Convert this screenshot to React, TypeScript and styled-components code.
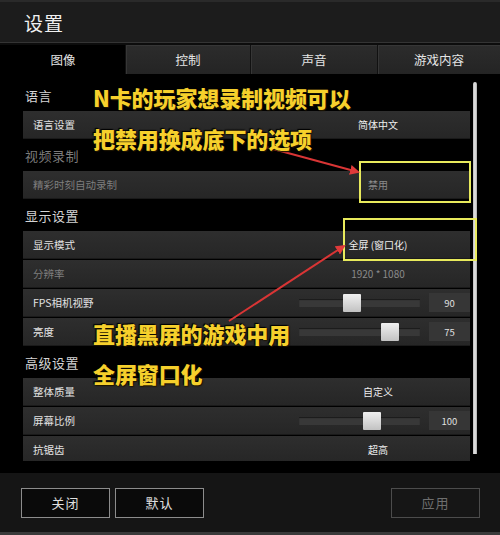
import React from "react";
import styled, { createGlobalStyle } from "styled-components";

const GlobalStyle = createGlobalStyle`
  html, body {
    margin: 0;
    padding: 0;
    background: #000;
  }
  body {
    font-family: "Noto Sans CJK SC", "Noto Sans", sans-serif;
    color: #ddd;
  }
`;

const Window = styled.div`
  position: relative;
  width: 500px;
  height: 535px;
  display: flex;
  flex-direction: column;
  background: #000;
  overflow: hidden;
`;

const TitleBar = styled.div`
  height: 40px;
  display: flex;
  align-items: center;
  padding-left: 24px;
  background: #1c1c1c;
  border-top: 2px solid #2a2a2a;
  border-bottom: 1px solid #343434;
  font-size: 19px;
  color: #f0f0f0;
  letter-spacing: 1px;
`;

const TabBar = styled.div`
  display: grid;
  grid-template-columns: 125px 125px 127px 1fr;
  height: 29px;
  padding-top: 2px;
  background: #0c0c0c;
`;

const Tab = styled.div<{ $active?: boolean }>`
  display: flex;
  align-items: center;
  justify-content: center;
  font-size: 12.5px;
  color: #e4e4e4;
  background: ${({ $active }) =>
    $active ? "#000" : "linear-gradient(#2c2c2c, #242424)"};
  border-left: 1px solid ${({ $active }) => ($active ? "#000" : "#111")};
  box-shadow: ${({ $active }) =>
    $active ? "none" : "inset 1px 1px 0 #363636"};
`;

const Content = styled.div`
  position: relative;
  flex: 1;
  background: #000;
  padding-bottom: 10px;
`;

const ScrollArea = styled.div`
  height: 382px;
  overflow: hidden;
  padding: 5px 30px 0 23px;
`;

const ScrollThumb = styled.div`
  position: absolute;
  top: 8px;
  right: 23px;
  width: 4px;
  height: 372px;
  border-radius: 2px 2px 0 0;
  background: linear-gradient(90deg, #bbb, #e6e6e6, #aaa);
`;

const SectionTitle = styled.div<{ $dim?: boolean }>`
  height: 32px;
  display: flex;
  align-items: center;
  padding-left: 2px;
  font-size: 13px;
  color: ${({ $dim }) => ($dim ? "#7c7c7c" : "#d4d4d4")};
  letter-spacing: 0.5px;
`;

const RowList = styled.div`
  display: flex;
  flex-direction: column;
  gap: 1px;
`;

const Row = styled.div`
  height: 28px;
  display: flex;
  align-items: center;
  background: linear-gradient(#2e2e2e, #262626);
  border-bottom: 1px solid #1a1a1a;
  box-sizing: border-box;
`;

const Label = styled.div<{ $dim?: boolean }>`
  flex: 1;
  padding-left: 10px;
  font-size: 10.5px;
  color: ${({ $dim }) => ($dim ? "#7e7e7e" : "#e2e2e2")};
`;

const Value = styled.div<{ $dim?: boolean }>`
  width: 176px;
  margin-right: 4px;
  text-align: center;
  font-size: 10px;
  color: ${({ $dim }) => ($dim ? "#8a8a8a" : "#eeeeee")};
`;

const Track = styled.div`
  position: relative;
  width: 121px;
  height: 8px;
  margin-right: 9px;
  background: #383838;
  box-shadow: inset 0 1px 1px #1a1a1a;
`;

const Thumb = styled.div<{ $pos: number }>`
  position: absolute;
  top: -5px;
  left: ${({ $pos }) => `calc(${$pos * 100}% - 9px)`};
  width: 18px;
  height: 18px;
  border-radius: 1px;
  background: linear-gradient(#f0f0f0, #c2c2c2);
`;

const NumberBox = styled.div`
  width: 41px;
  height: 19px;
  display: flex;
  align-items: center;
  justify-content: center;
  background: #363636;
  font-size: 9.5px;
  color: #e0e0e0;
`;

const BottomBar = styled.div`
  height: 59px;
  display: flex;
  align-items: center;
  gap: 5px;
  padding: 0 20px 0 21px;
  background: #151515;
  border-bottom: 3px solid #3a3a3a;
`;

const Button = styled.div<{ $disabled?: boolean }>`
  width: 87px;
  height: 28px;
  display: flex;
  align-items: center;
  justify-content: center;
  font-size: 13px;
  letter-spacing: 1px;
  color: ${({ $disabled }) => ($disabled ? "#6e6e6e" : "#e0e0e0")};
  background: ${({ $disabled }) => ($disabled ? "#161616" : "#0a0a0a")};
  border: 1px solid ${({ $disabled }) => ($disabled ? "#4c4c4c" : "#8c8c8c")};
`;

const Spacer = styled.div`
  flex: 1;
`;

/* annotation overlay drawn on top of the screenshot */
const Note = styled.div<{ $top: number }>`
  position: absolute;
  left: 93px;
  top: ${({ $top }) => $top}px;
  line-height: 30px;
  font-size: 22px;
  font-weight: 900;
  color: #f6d02c;
  letter-spacing: -0.1px;
  text-shadow: 0 0 2px #000, 1px 1px 1px #2a1e00, -1px -1px 1px #000;
  pointer-events: none;
`;

const Highlight = styled.div<{ $l: number; $t: number; $w: number; $h: number }>`
  position: absolute;
  left: ${({ $l }) => $l}px;
  top: ${({ $t }) => $t}px;
  width: ${({ $w }) => $w}px;
  height: ${({ $h }) => $h}px;
  box-sizing: border-box;
  border: 2px solid #e8ea5c;
  pointer-events: none;
`;

const ArrowLayer = styled.svg`
  position: absolute;
  left: 0;
  top: 0;
  pointer-events: none;
`;

interface SliderRowProps {
  label: string;
  value: number;
  pos: number;
}

const SliderRow = ({ label, value, pos }: SliderRowProps) => (
  <Row>
    <Label>{label}</Label>
    <Track>
      <Thumb $pos={pos} />
    </Track>
    <NumberBox>{value}</NumberBox>
  </Row>
);

export default function App() {
  return (
    <>
      <GlobalStyle />
      <Window>
        <TitleBar>设置</TitleBar>
        <TabBar>
          <Tab $active>图像</Tab>
          <Tab>控制</Tab>
          <Tab>声音</Tab>
          <Tab>游戏内容</Tab>
        </TabBar>

        <Content>
          <ScrollArea>
            <SectionTitle>语言</SectionTitle>
            <RowList>
              <Row>
                <Label>语言设置</Label>
                <Value>简体中文</Value>
              </Row>
            </RowList>

            <SectionTitle $dim>视频录制</SectionTitle>
            <RowList>
              <Row>
                <Label $dim>精彩时刻自动录制</Label>
                <Value $dim>禁用</Value>
              </Row>
            </RowList>

            <SectionTitle>显示设置</SectionTitle>
            <RowList>
              <Row>
                <Label>显示模式</Label>
                <Value>全屏 (窗口化)</Value>
              </Row>
              <Row>
                <Label $dim>分辨率</Label>
                <Value $dim>1920 * 1080</Value>
              </Row>
              <SliderRow label="FPS相机视野" value={90} pos={0.44} />
              <SliderRow label="亮度" value={75} pos={0.75} />
            </RowList>

            <SectionTitle>高级设置</SectionTitle>
            <RowList>
              <Row>
                <Label>整体质量</Label>
                <Value>自定义</Value>
              </Row>
              <SliderRow label="屏幕比例" value={100} pos={0.6} />
              <Row>
                <Label>抗锯齿</Label>
                <Value>超高</Value>
              </Row>
            </RowList>
          </ScrollArea>
          <ScrollThumb />
        </Content>

        <BottomBar>
          <Button>关闭</Button>
          <Button>默认</Button>
          <Spacer />
          <Button $disabled>应用</Button>
        </BottomBar>

        <Highlight $l={359} $t={161} $w={112} $h={42} />
        <Highlight $l={343} $t={218} $w={134} $h={43} />

        <ArrowLayer width={500} height={535} viewBox="0 0 500 535">
          <defs>
            <marker
              id="head"
              viewBox="0 0 10 10"
              refX="8"
              refY="5"
              markerWidth="5"
              markerHeight="5"
              orient="auto"
            >
              <path d="M0 0 L10 5 L0 10 z" fill="#e03a3a" />
            </marker>
          </defs>
          <line
            x1={262}
            y1={146}
            x2={358}
            y2={172}
            stroke="#d93535"
            strokeWidth={2}
            markerEnd="url(#head)"
          />
          <line
            x1={229}
            y1={321}
            x2={344}
            y2={246}
            stroke="#d93535"
            strokeWidth={2}
            markerEnd="url(#head)"
          />
        </ArrowLayer>

        <Note $top={82}>N卡的玩家想录制视频可以</Note>
        <Note $top={123}>把禁用换成底下的选项</Note>
        <Note $top={318}>直播黑屏的游戏中用</Note>
        <Note $top={358}>全屏窗口化</Note>
      </Window>
    </>
  );
}
